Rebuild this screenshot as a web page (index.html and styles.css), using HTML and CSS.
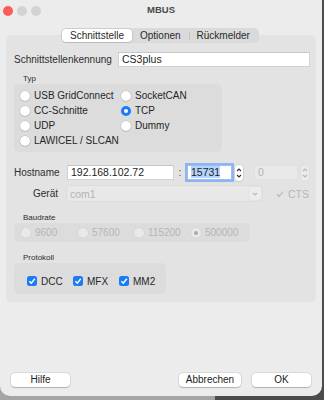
FILE: index.html
```html
<!DOCTYPE html>
<html>
<head>
    <meta charset="utf-8">
    <title>MBUS</title>
    <link rel="stylesheet" href="styles.css">
</head>
<body>
<div class="window">
    <div class="titlebar">
        <div class="lights">
            <i class="light red"></i>
            <i class="light"></i>
            <i class="light"></i>
        </div>
        <div class="title">MBUS</div>
    </div>

    <div class="tabs">
        <span class="tab on">Schnittstelle</span>
        <span class="tab">Optionen</span>
        <span class="tab sep">Rückmelder</span>
    </div>

    <div class="panel">
        <div class="row name-row">
            <span class="lbl">Schnittstellenkennung</span>
            <span class="field name-field">CS3plus</span>
        </div>

        <div class="caption">Typ</div>
        <div class="group typ">
            <div class="opt"><i class="radio"></i>USB GridConnect</div>
            <div class="opt"><i class="radio"></i>SocketCAN</div>
            <div class="opt"><i class="radio"></i>CC-Schnitte</div>
            <div class="opt"><i class="radio on"></i>TCP</div>
            <div class="opt"><i class="radio"></i>UDP</div>
            <div class="opt"><i class="radio"></i>Dummy</div>
            <div class="opt"><i class="radio"></i>LAWICEL / SLCAN</div>
        </div>

        <div class="row host-row">
            <span class="lbl side">Hostname</span>
            <span class="field host-field">192.168.102.72</span>
            <span class="colon">:</span>
            <span class="field port-field focus"><span class="sel">15731</span></span>
            <span class="stepper">
                <svg width="8" height="16" viewBox="0 0 8 16"><path d="M2 6 L4 4 L6 6 M2 10 L4 12 L6 10" fill="none" stroke="#333" stroke-width="1.1"/></svg>
            </span>
            <span class="field port2-field off">0</span>
            <span class="stepper off">
                <svg width="8" height="16" viewBox="0 0 8 16"><path d="M2 6 L4 4 L6 6 M2 10 L4 12 L6 10" fill="none" stroke="#b8b8b8" stroke-width="1.1"/></svg>
            </span>
        </div>

        <div class="row dev-row">
            <span class="lbl side">Gerät</span>
            <span class="select off">
                <span class="select-text">com1</span>
                <span class="chev">
                    <svg width="8" height="8" viewBox="0 0 8 8"><path d="M2 3 L4 5 L6 3" fill="none" stroke="#b8b8b8" stroke-width="1.1"/></svg>
                </span>
            </span>
            <span class="cts">
                <svg width="10" height="10" viewBox="0 0 10 10"><path d="M2 5.2 L4 7.4 L8 2.6" fill="none" stroke="#bdbdbd" stroke-width="1.4"/></svg>
                CTS
            </span>
        </div>

        <div class="caption baud-cap">Baudrate</div>
        <div class="group baud">
            <div class="opt off"><i class="radio"></i>9600</div>
            <div class="opt off"><i class="radio"></i>57600</div>
            <div class="opt off"><i class="radio"></i>115200</div>
            <div class="opt off"><i class="radio dot"></i>500000</div>
        </div>

        <div class="caption proto-cap">Protokoll</div>
        <div class="group proto">
            <div class="opt"><i class="check"><svg width="10" height="10" viewBox="0 0 10 10"><path d="M2.4 5.2 L4.3 7.2 L7.8 2.8" fill="none" stroke="#fff" stroke-width="1.5"/></svg></i>DCC</div>
            <div class="opt"><i class="check"><svg width="10" height="10" viewBox="0 0 10 10"><path d="M2.4 5.2 L4.3 7.2 L7.8 2.8" fill="none" stroke="#fff" stroke-width="1.5"/></svg></i>MFX</div>
            <div class="opt"><i class="check"><svg width="10" height="10" viewBox="0 0 10 10"><path d="M2.4 5.2 L4.3 7.2 L7.8 2.8" fill="none" stroke="#fff" stroke-width="1.5"/></svg></i>MM2</div>
        </div>
    </div>

    <div class="footer">
        <span class="btn">Hilfe</span>
        <span class="spacer"></span>
        <span class="btn wide">Abbrechen</span>
        <span class="btn">OK</span>
    </div>
</div>
</body>
</html>
```

FILE: styles.css
```css
html, body {
    margin: 0;
    padding: 0;
}

body {
    width: 324px;
    height: 400px;
    background: linear-gradient(to right, #a4a4a4 0, #a4a4a4 215px, #4c4c4c 215px);
    font-family: "Liberation Sans", Arial, sans-serif;
    font-size: 10px;
    color: #262626;
    overflow: hidden;
}

.window {
    width: 322px;
    height: 396px;
    background: #ececec;
    border-radius: 0 0 10px 10px;
    display: flex;
    flex-direction: column;
}

/* title bar */
.titlebar {
    height: 22px;
    display: flex;
    align-items: center;
    position: relative;
}

.lights {
    display: flex;
    gap: 4px;
    padding-left: 3px;
    margin-top: -1px;
}

.light {
    display: block;
    width: 10px;
    height: 10px;
    border-radius: 50%;
    background: #d3d3d3;
}

.light.red {
    background: #fc5c57;
}

.title {
    position: absolute;
    left: 0;
    right: 0;
    top: 0;
    line-height: 20px;
    text-align: center;
    font-weight: bold;
    font-size: 9.5px;
    color: #4a4a4a;
}

/* segmented tabs */
.tabs {
    align-self: center;
    margin-top: 6px;
    margin-left: -2px;
    display: flex;
    padding: 1px;
    background: #dadada;
    border-radius: 5px;
    position: relative;
    z-index: 2;
    height: 13px;
}

.tab {
    padding: 0 8px;
    line-height: 13px;
    border-radius: 4px;
    color: #2a2a2a;
    position: relative;
}

.tab.on {
    background: #fff;
    box-shadow: 0 0 0 0.5px rgba(0, 0, 0, 0.12), 0 1px 1px rgba(0, 0, 0, 0.1);
}

.tab.sep:before {
    content: "";
    position: absolute;
    left: 0;
    top: 3px;
    height: 8px;
    border-left: 1px solid #c4c4c4;
}

/* content panel */
.panel {
    margin: -8px 6px 0 6px;
    padding: 17px 6px 8px 8px;
    background: #e3e3e3;
    border-radius: 5px;
}

.row {
    display: flex;
    align-items: center;
    height: 15px;
}

.lbl {
    color: #2e2e2e;
}

.side {
    width: 44px;
    text-align: right;
    margin-right: 9px;
}

.field {
    height: 15px;
    box-sizing: border-box;
    background: #fff;
    border: 1px solid #d2d2d2;
    border-top-color: #c6c6c6;
    line-height: 13px;
    padding: 0 3px;
    font-size: 10.5px;
    color: #1e1e1e;
}

.name-field {
    margin-left: auto;
    width: 192px;
}

.caption {
    font-size: 8px;
    line-height: 10px;
    margin: 7px 0 0 9px;
    color: #2e2e2e;
}

.group {
    background: #dcdcdc;
    border-radius: 5px;
}

.opt {
    display: flex;
    align-items: center;
    gap: 4px;
    height: 15px;
    white-space: nowrap;
}

.radio {
    display: block;
    width: 10px;
    height: 10px;
    box-sizing: border-box;
    border-radius: 50%;
    background: #fff;
    box-shadow: 0 0 0 0.5px rgba(0, 0, 0, 0.15), 0 0.5px 1px rgba(0, 0, 0, 0.15);
    position: relative;
}

.radio.on {
    background: #1a7cf4;
    box-shadow: none;
}

.radio.on:after, .radio.dot:after {
    content: "";
    position: absolute;
    left: 3px;
    top: 3px;
    width: 4px;
    height: 4px;
    border-radius: 50%;
    background: #fff;
}

.radio.dot:after {
    background: #a9a9a9;
}

.typ {
    width: 208px;
    box-sizing: border-box;
    padding: 4px 0 4px 6px;
    display: grid;
    grid-template-columns: 101px auto;
}

/* host row */
.host-row {
    margin-top: 13px;
}

.host-field {
    width: 107px;
}

.colon {
    width: 12px;
    text-align: center;
    color: #444;
}

.port-field {
    width: 45px;
    margin-left: 1px;
    border-color: #9dbcf0;
    box-shadow: 0 0 0 2px #8fb4f2;
}

.sel {
    background: #b3d4fd;
}

.stepper {
    display: block;
    width: 8px;
    height: 16px;
    margin-left: 3px;
    background: #fff;
    border-radius: 3px;
    box-shadow: 0 0 0 0.5px rgba(0, 0, 0, 0.12), 0 0.5px 1px rgba(0, 0, 0, 0.15);
}

.stepper svg {
    display: block;
}

.stepper.off {
    background: #eaeaea;
    box-shadow: 0 0 0 0.5px rgba(0, 0, 0, 0.06);
}

.port2-field {
    width: 44px;
    margin-left: 11px;
}

.off.field {
    background: #e9e9e9;
    border-color: #e0e0e0;
    color: #b4b4b4;
}

/* device row */
.dev-row {
    margin-top: 6px;
}

.select {
    width: 195px;
    height: 15px;
    box-sizing: border-box;
    display: flex;
    align-items: center;
    background: #e8e8e8;
    border-radius: 3px;
    box-shadow: 0 0 0 0.5px rgba(0, 0, 0, 0.06);
    color: #b4b4b4;
    font-size: 10.5px;
}

.select-text {
    flex: 1;
    padding-left: 3px;
}

.chev {
    display: flex;
    align-items: center;
    justify-content: center;
    width: 12px;
    height: 13px;
    margin-right: 1px;
    background: #ececec;
    border-radius: 3px;
    box-shadow: 0 0 0 0.5px rgba(0, 0, 0, 0.05);
}

.cts {
    display: flex;
    align-items: center;
    gap: 3px;
    margin-left: 13px;
    color: #b6b6b6;
    font-size: 10.5px;
}

/* baudrate */
.baud-cap {
    margin-top: 12px;
}

.baud {
    width: 236px;
    height: 19px;
    box-sizing: border-box;
    padding-left: 7px;
    display: grid;
    grid-template-columns: 57px 56px 57px auto;
    align-items: center;
}

.opt.off {
    color: #b6b6b6;
}

.opt.off .radio {
    background: #e9e9e9;
    box-shadow: 0 0 0 0.5px rgba(0, 0, 0, 0.06);
}

/* protokoll */
.proto-cap {
    margin-top: 11px;
}

.proto {
    width: 152px;
    box-sizing: border-box;
    padding: 13px 0 8px 13px;
    display: flex;
}

.proto .opt {
    width: 46px;
    height: 10px;
}

.check {
    display: block;
    width: 10px;
    height: 10px;
    border-radius: 2.5px;
    background: #1a7cf4;
}

.check svg {
    display: block;
}

/* buttons */
.footer {
    margin-top: auto;
    display: flex;
    gap: 11px;
    padding: 0 11px 9px 11px;
}

.spacer {
    flex: 1;
}

.btn {
    width: 59px;
    height: 14px;
    line-height: 14px;
    text-align: center;
    background: #fff;
    border-radius: 4px;
    box-shadow: 0 0 0 0.5px rgba(0, 0, 0, 0.12), 0 0.5px 1px rgba(0, 0, 0, 0.2);
    color: #222;
}

.btn.wide {
    width: 62px;
}
```
